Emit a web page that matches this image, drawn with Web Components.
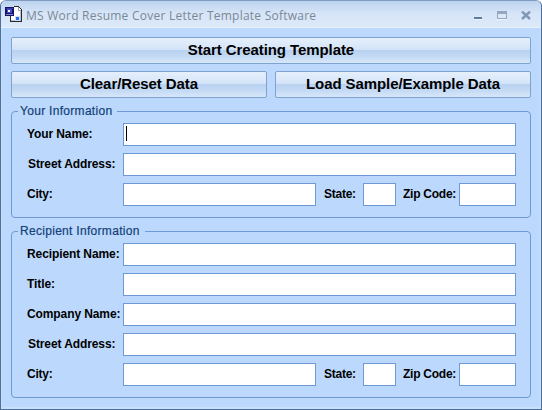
<!DOCTYPE html>
<html><head><meta charset="utf-8">
<style>
html,body{margin:0;padding:0;background:#fff;}
body{width:542px;height:410px;overflow:hidden;font-family:"Liberation Sans",Arial,sans-serif;}
</style></head><body>
<app-window>
  <title-bar slot="title">MS Word Resume Cover Letter Template Software</title-bar>
  <gloss-button wide>Start Creating Template</gloss-button>
  <button-row>
    <gloss-button>Clear/Reset Data</gloss-button>
    <gloss-button>Load Sample/Example Data</gloss-button>
  </button-row>
  <group-box heading="Your Information">
    <form-row label="Your Name:"><text-field focused></text-field></form-row>
    <form-row label="Street Address:" indent="1"><text-field></text-field></form-row>
    <address-row></address-row>
  </group-box>
  <group-box heading="Recipient Information">
    <form-row label="Recipient Name:"><text-field></text-field></form-row>
    <form-row label="Title:"><text-field></text-field></form-row>
    <form-row label="Company Name:"><text-field></text-field></form-row>
    <form-row label="Street Address:" indent="1"><text-field></text-field></form-row>
    <address-row></address-row>
  </group-box>
</app-window>
<script>
function def(name, html, init){
  customElements.define(name, class extends HTMLElement{
    constructor(){super();this.attachShadow({mode:'open'}).innerHTML=html;}
    connectedCallback(){ if(init) init.call(this,this.shadowRoot); }
  });
}
def('app-window',`<style>
:host{display:flex;flex-direction:column;box-sizing:border-box;width:542px;height:410px;background:#c9def7;border-radius:6px 6px 0 0;border:1px solid #4d6f9c;border-top-color:#7f9cc0;overflow:hidden}
.client{flex:1;margin:0 1px 2px 1px;box-sizing:border-box;background:#bcd9fd;padding:9px 9px 0 9px;display:flex;flex-direction:column}
</style><slot name="title"></slot><div class="client"><slot></slot></div>`);
def('title-bar',`<style>
:host{display:flex;align-items:center;height:27px;flex:none;box-sizing:border-box;padding:2px 3px 0 4px;gap:4px;background:linear-gradient(#bcd3ee,#d5e4f7 45%,#dce9f9);border-bottom:1px solid #e6f0fc;font:12px "Open Sans","Liberation Sans",sans-serif;color:#7a8896;letter-spacing:.24px}
svg{flex:none}
.i{margin-top:-2px}
.t{flex:1;white-space:nowrap}
.c{display:flex;align-items:center;height:100%}
.b{width:24px;height:20px;display:flex;justify-content:center;align-items:center}
</style>
<svg class="i" width="17" height="17" viewBox="0 0 17 17" shape-rendering="crispEdges">
<path d="M9 .5H13.5L16.5 3.5V15.5H5.5V10" fill="#fff" stroke="#2a2a2a"/>
<path d="M13 1h1v3h2v1h-3z" fill="#9aa4b2"/>
<path d="M15 5h1v10H6v-1h9z" fill="#b9c4d2"/>
<rect x="0" y="1" width="9" height="9" fill="#14146e"/>
<rect x="1" y="2" width="7" height="1" fill="#3a3aa8"/>
<rect x="2" y="3" width="5" height="4" fill="#4c4cc4"/>
<rect x="3" y="4" width="2" height="2" fill="#fff"/>
<rect x="1" y="8" width="7" height="1" fill="#8888c8"/>
<rect x="10" y="10" width="5" height="5" fill="#cfe0f6"/>
<rect x="11" y="11" width="3" height="3" fill="#2a6cf0"/>
</svg>
<span class="t"><slot></slot></span>
<span class="c">
<span class="b"><svg width="8" height="10" viewBox="0 0 8 10" style="margin-top:2px"><rect y="6" width="8" height="2" fill="#5d7b9f"/><rect y="8" width="8" height="1" fill="#eef5fd"/></svg></span>
<span class="b"><svg width="10" height="9" viewBox="0 0 10 9"><rect x=".5" y=".5" width="9" height="7" fill="#dce8f6" stroke="#93a7bf"/><rect x="1" y="1" width="8" height="2" fill="#93a7bf"/><rect y="8" width="10" height="1" fill="#eef5fd"/></svg></span>
<span class="b"><svg width="10" height="9" viewBox="0 0 10 9"><path d="M1 .5l8 7.5M9 .5l-8 7.5" stroke="#8097b3" stroke-width="2.4" fill="none"/></svg></span>
</span>`);
def('gloss-button',`<style>
:host{display:flex;flex:1;align-items:center;justify-content:center;box-sizing:border-box;height:27px;padding-bottom:2px;border:1px solid #7fa3d0;border-radius:2px;background:linear-gradient(#e6f0fc,#d3e3f7 47%,#b9d2f0 50%,#c4daf4 75%,#d8e7f9);font:bold 15px "Liberation Sans",Arial,sans-serif;letter-spacing:-.08px;color:#000;white-space:nowrap}
:host([wide]){flex:none;width:100%;margin-bottom:7px}
</style><slot></slot>`);
def('button-row',`<style>:host{display:flex;gap:8px;width:100%}</style><slot></slot>`);
def('group-box',`<style>
:host{display:block;margin-top:6px}
fieldset{margin:0;padding:5px 14px 11px 15px;border:1px solid #6d9ad6;border-radius:4px;display:flex;flex-direction:column;gap:7px;min-width:0}
legend{margin-left:-9px;padding:0 5px 0 2px;font:12px/14px "Liberation Sans",Arial,sans-serif;color:#123f78;letter-spacing:.3px;-webkit-text-stroke:.2px #123f78}
</style><fieldset><legend></legend><slot></slot></fieldset>`,function(r){r.querySelector('legend').textContent=this.getAttribute('heading');});
def('form-row',`<style>
:host{display:flex;align-items:center;height:23px}
.l{flex:none;width:96px;box-sizing:border-box;font:bold 12px "Liberation Sans",Arial,sans-serif;letter-spacing:-.1px;color:#000;white-space:nowrap;margin-top:-2px}
::slotted(*){flex:1}
</style><span class="l"></span><slot></slot>`,function(r){const l=r.querySelector('.l');l.textContent=this.getAttribute('label');l.style.paddingLeft=(this.getAttribute('indent')||0)+'px';});
def('text-field',`<style>
:host{display:block;box-sizing:border-box;height:23px;background:#fff;border:1px solid #6d9ad6;min-width:0}
i{display:none;width:1px;height:15px;background:#000;margin:2px 0 0 2px}
:host([focused]) i{display:block}
</style><i></i>`);
def('address-row',`<style>
:host{display:flex;align-items:center;height:23px}
.l{flex:none;font:bold 12px "Liberation Sans",Arial,sans-serif;letter-spacing:-.25px;color:#000;white-space:nowrap;margin-top:-2px}
.city{width:96px}
.state{margin-left:8px;width:39px}
.zip{margin-left:7px;width:56px}
.a{width:193px}.b{width:33px}.c{width:57px}
</style>
<span class="l city">City:</span><text-field class="a"></text-field>
<span class="l state">State:</span><text-field class="b"></text-field>
<span class="l zip">Zip Code:</span><text-field class="c"></text-field>`);
</script>
</body></html>
